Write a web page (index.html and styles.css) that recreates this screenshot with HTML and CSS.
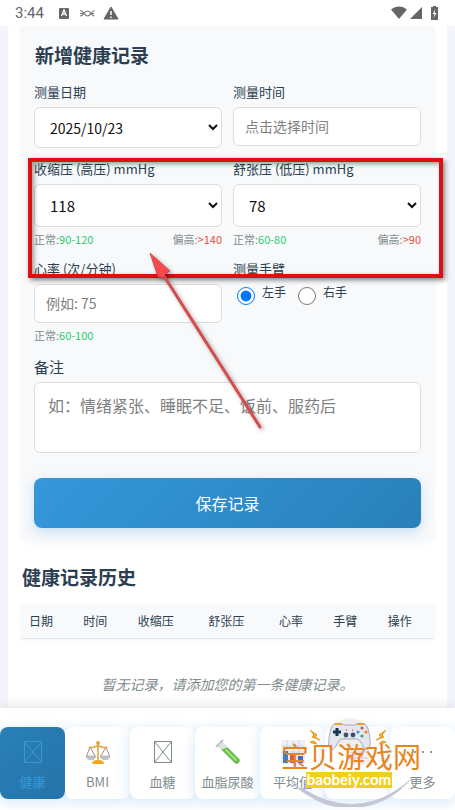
FILE: index.html
```
<!DOCTYPE html>
<html lang="zh-CN">
<head>
    <meta charset="UTF-8">
    <meta name="viewport" content="width=device-width, initial-scale=1.0">
    <title>健康记录</title>
    <link rel="stylesheet" href="styles.css">
</head>
<body>
    <header class="status">
        <span class="time">3:44</span>
        <svg class="status-left" width="62" height="14" viewBox="0 0 62 14">
            <rect x="1" y="2" width="10" height="11" rx="1" fill="#666"/>
            <path d="M3.500 10 6 4l2.500 6M4.500 8h3" fill="none" stroke="#fff" stroke-width="1.300"/>
            <path d="M22 4.500c4 0 4 5.500 7.500 5.500s3.500-5 7-5.500M22 10c4 0 4-5 7.500-5s3.500 5 7 5M22 7.500h3M33 7.500h3" fill="none" stroke="#777" stroke-width="1.100"/>
            <path d="M53 1 60 13H46z" fill="#666" stroke="#666" stroke-linejoin="round"/>
            <path d="M53 5v4M53 10.500v1.500" stroke="#fff" stroke-width="1.500"/>
        </svg>
        <svg class="status-right" width="50" height="16" viewBox="0 0 50 16">
            <path d="M1 4.500C6 .5 12 .5 17 4.500L9 14z" fill="#666"/>
            <path d="M32 2v12H20z" fill="#666"/>
            <path d="M41 2h2V1h3v1h2v13h-7z" fill="#666"/>
            <path d="M45.500 4 42.500 9H44.500L43.500 13 46.500 8H44.500z" fill="#fff"/>
        </svg>
    </header>

    <main class="container">
        <form class="card">
            <h2>新增健康记录</h2>
            <div class="grid">
                <div class="field">
                    <label for="date">测量日期</label>
                    <select id="date" class="date"><option>2025/10/23</option></select>
                </div>
                <div class="field">
                    <label for="time">测量时间</label>
                    <input id="time" type="text" placeholder="点击选择时间">
                </div>
                <div class="field">
                    <label for="sys">收缩压 (高压) mmHg</label>
                    <select id="sys"><option>118</option></select>
                    <div class="hint">
                        <span>正常:<b class="ok">90-120</b></span>
                        <span>偏高:<b class="high">&gt;140</b></span>
                    </div>
                </div>
                <div class="field">
                    <label for="dia">舒张压 (低压) mmHg</label>
                    <select id="dia"><option>78</option></select>
                    <div class="hint">
                        <span>正常:<b class="ok">60-80</b></span>
                        <span>偏高:<b class="high">&gt;90</b></span>
                    </div>
                </div>
                <div class="field">
                    <label for="rate">心率 (次/分钟)</label>
                    <input id="rate" type="text" placeholder="例如: 75">
                    <div class="hint">
                        <span>正常:<b class="ok">60-100</b></span>
                    </div>
                </div>
                <fieldset class="field">
                    <legend>测量手臂</legend>
                    <div class="arms">
                        <input id="left" type="radio" name="arm" checked>
                        <label for="left">左手</label>
                        <input id="right" type="radio" name="arm">
                        <label for="right">右手</label>
                    </div>
                </fieldset>
            </div>
            <div class="field note">
                <label for="note">备注</label>
                <textarea id="note" placeholder="如：情绪紧张、睡眠不足、饭前、服药后"></textarea>
            </div>
            <button class="save" type="button">保存记录</button>
        </form>

        <section class="history">
            <h2>健康记录历史</h2>
            <table>
                <thead>
                    <tr>
                        <th>日期</th>
                        <th>时间</th>
                        <th>收缩压</th>
                        <th>舒张压</th>
                        <th>心率</th>
                        <th>手臂</th>
                        <th>操作</th>
                    </tr>
                </thead>
            </table>
            <p class="empty">暂无记录，请添加您的第一条健康记录。</p>
        </section>
    </main>

    <nav class="tabs">
        <a href="#" class="active">
            <svg width="26" height="26" viewBox="0 0 26 26"><path d="M4.500 2.500h17v21h-17zM4.500 2.500l17 21M21.500 2.500l-17 21" fill="none" stroke="currentColor"/></svg>
            <span>健康</span>
        </a>
        <a href="#">
            <svg width="26" height="26" viewBox="0 0 26 26">
                <path d="M5 8 1.500 17M5 8l5 9M21 8l-5 9M21 8l3.500 9" fill="none" stroke="#b58a80"/>
                <path d="M1 17h10c-1 5-9 5-10 0zM15 17h10c-1 5-9 5-10 0z" fill="#bfc3c8" stroke="#989da3" stroke-width=".5"/>
                <path d="M13 5v18M4 8c4 2 5-1 9-1s5 3 9 1" fill="none" stroke="#e2a03a" stroke-width="1.500"/>
                <circle cx="13" cy="4" r="2" fill="#f0a32c"/>
                <path d="M7 25c0-4 4-4 6-4s6 0 6 4z" fill="#f5a623"/>
            </svg>
            <span>BMI</span>
        </a>
        <a href="#">
            <svg width="26" height="26" viewBox="0 0 26 26"><path d="M4.500 2.500h17v21h-17zM4.500 2.500l17 21M21.500 2.500l-17 21" fill="none" stroke="currentColor"/></svg>
            <span>血糖</span>
        </a>
        <a href="#">
            <svg width="26" height="26" viewBox="0 0 26 26">
                <path d="M3 7 7 3l17 17c2 3-2 6-4 4z" fill="#dde6e2" stroke="#b9c8c0" stroke-width=".6"/>
                <path d="M6 10c3 1 4-2 7-1l11 11c2 3-2 6-4 4z" fill="#66bd43"/>
                <path d="m11 11 10 10" stroke="#a5e37d" stroke-width="2" stroke-linecap="round"/>
                <path d="M1.500 7.500 7.500 1.500" stroke="#b8c7c4" stroke-width="2" stroke-linecap="round"/>
            </svg>
            <span>血脂尿酸</span>
        </a>
        <a href="#">
            <svg width="26" height="26" viewBox="0 0 26 26">
                <path d="M1 1h24v24H1z" fill="#eef1f7"/>
                <path d="M1 7h24M1 13h24M1 19h24M7 1v24M13 1v24M19 1v24" stroke="#c5cbe0" stroke-width=".7"/>
                <path d="M3 12h5v12H3z" fill="#3f7fd0"/>
                <path d="M10 15h5v9h-5z" fill="#e0564c"/>
                <path d="M18 17h5v7h-5z" fill="#4666c8"/>
            </svg>
            <span>平均值</span>
        </a>
        <a href="#" aria-label="日历">
            <svg width="26" height="26" viewBox="0 0 26 26">
                <path d="M2 1h22v24H2z" fill="#f5f2f5"/>
                <path d="M2 7h22M2 13h22M2 19h22M9 1v24M17 1v24" stroke="#dfc8d0"/>
                <path d="m3 20 7-7 5 4 8-11" fill="none" stroke="#e58787" stroke-width="1.500"/>
            </svg>
        </a>
        <a href="#">
            <svg width="26" height="26" viewBox="0 0 26 26"><circle cx="5" cy="13" r="1" fill="#777"/><circle cx="13" cy="13" r="1" fill="#777"/><circle cx="21" cy="13" r="1" fill="#777"/></svg>
            <span>更多</span>
        </a>
    </nav>

    <!-- 标注 -->
    <div class="mark"></div>
    <svg class="arrow" width="124" height="186" viewBox="0 0 124 186">
        <path d="M19 27 115 178" stroke="#d64b4b" stroke-width="3" stroke-linecap="round"/>
        <path d="M5 4 25 22 20 25 19 29 13 28z" fill="#f84a4a" stroke="#c33a3a" stroke-width=".7"/>
    </svg>

    <!-- 水印 -->
    <svg class="watermark" width="140" height="92" viewBox="0 0 140 92">
        <circle cx="69" cy="20" r="17" fill="#efefef"/>
        <path d="M53 9c3-1 7-1 10 1h11c3-2 7-2 10-1 4 3 6 17 5 22-1 5-5 4-7 0-2-4-4-7-7-7H62c-3 0-5 3-7 7-2 4-6 5-7 0-1-5 1-19 5-22z" fill="#e6e6ee" stroke="#a9a9b9"/>
        <path d="M54 9h7M76 9h7" stroke="#e5a22c" stroke-width="2"/>
        <path d="M56 13v8M52 17h8" stroke="#123a4c" stroke-width="3"/>
        <circle cx="81" cy="13" r="1.600" fill="#e8503a"/>
        <circle cx="77" cy="17" r="1.600" fill="#3a9bd8"/>
        <circle cx="85" cy="17" r="1.600" fill="#f08a24"/>
        <circle cx="81" cy="21" r="1.600" fill="#31a6a0"/>
        <circle cx="65" cy="20" r="2.400" fill="#34546a"/>
        <circle cx="72" cy="20" r="2.400" fill="#34546a"/>
        <path d="M65 15h1M71 15h1" stroke="#e0507a" stroke-width="1.500"/>
        <path d="m30 15 7 5-2 2 5 3-8-3 2-2zM106 15l-7 5 2 2-5 3 8-3-2-2zM30 27l4-1 3 3-5-1zM106 27l-4-1-3 3 5-1z" transform="translate(-1 0)" fill="#f6b12e" stroke="#e79a1f"/>
        <path d="M10 67c35 31 85 31 121-4-33 36-90 36-121 4z" fill="#c5c6d6" stroke="#c5c6d6" stroke-width="1"/>
        <path d="M14 69c34 28 80 28 112 0-30 29-82 31-112 0z" fill="#c5c6d6"/>
        <path d="M20 73c34 23 72 22 100 0-28 24-72 27-100 0z" fill="#c5c6d6" stroke="#c5c6d6" stroke-width="2"/>
        <rect x="25" y="57" width="86" height="16" fill="#f0cf1e"/>
        <text class="wm-name" x="0" y="53">宝贝游戏网</text>
        <text class="wm-site" x="68" y="70" text-anchor="middle">baobeiy.com</text>
    </svg>
</body>
</html>
```
FILE: styles.css
```
*{
    margin: 0;
    padding: 0;
    box-sizing: border-box;
}
body{
    position: relative;
    display: flex;
    flex-direction: column;
    min-height: 100vh;
    background-color: #f3f5fa;
    color: #2c3e50;
    font-family: "Noto Sans CJK SC", sans-serif;
}
input, select, textarea, button{
    font-family: inherit;
}

/* 状态栏 */
.status{
    display: flex;
    align-items: center;
    height: 26px;
    padding: 0 15px;
    background-color: #fff;
}
.time{
    font-family: Roboto, sans-serif;
    font-size: 15px;
    color: #666;
}
.status-left{
    margin-left: 14px;
}
.status-right{
    margin-left: auto;
}

/* 内容 */
.container{
    flex: 1;
    margin: 0 8px;
    padding: 0 12px;
    background-color: #fff;
}
.card{
    padding: 15px 14px;
    background-color: #f8f9fb;
    box-shadow: 0 2px 6px rgba(0, 0, 0, 0.02);
    border-radius: 0 0 8px 8px;
}
h2{
    padding-left: 1px;
    font-size: 19px;
    line-height: 28px;
    margin-bottom: 13px;
}
.grid{
    display: grid;
    grid-template-columns: 1fr 1fr;
    gap: 11px;
}
.field{
    min-width: 0;
    border: none;
}
.field > label, legend{
    display: block;
    margin-bottom: 5px;
    font-size: 13px;
    line-height: 20px;
}
.field > input, select, textarea{
    display: block;
    width: 100%;
    height: 39px;
    padding: 0 11px;
    border: 1px solid #ddd;
    border-radius: 6px;
    background-color: #fff;
    font-size: 14px;
}
.field > input{
    padding-bottom: 2px;
}
select{
    height: 43px;
    font-size: 15px;
    color: #111;
}
select.date{
    height: 41px;
    font-size: 14px;
}
::placeholder{
    color: #808080;
}
.hint{
    display: flex;
    justify-content: space-between;
    margin: 4px 0 1px;
    font-size: 11px;
    line-height: 16px;
    color: #7f8c8d;
}
.hint b{
    font-weight: normal;
}
.hint .ok{
    color: #2ecc71;
}
.hint .high{
    color: #e74c3c;
}
.arms{
    display: flex;
    align-items: flex-start;
    padding-left: 4px;
    font-size: 12px;
    line-height: 16px;
}
.arms input{
    width: 18px;
    height: 18px;
    margin: 3px 7px 0 0;
}
.arms label{
    margin-right: 12px;
}
.note{
    margin-top: 13px;
}
.note > label{
    font-size: 15px;
}
textarea{
    height: 71px;
    padding: 10px 13px;
    font-size: 16px;
    resize: none;
}
.save{
    display: block;
    width: 100%;
    height: 50px;
    margin-top: 25px;
    border: none;
    border-radius: 8px;
    background: linear-gradient(135deg, #3498db, #2980b9);
    box-shadow: 0 4px 12px rgba(52, 152, 219, 0.25);
    color: #fff;
    font-size: 16px;
}

/* 历史记录 */
.history{
    padding: 20px 1px 14px;
}
table{
    width: 100%;
    border-collapse: collapse;
    box-shadow: 0 2px 6px rgba(0, 0, 0, 0.04);
}
th{
    padding: 8px;
    border-bottom: 1px solid #e3e6ea;
    background-color: #f8f9fb;
    font-size: 12px;
    font-weight: normal;
    line-height: 18px;
    text-align: left;
}
.empty{
    margin-top: 35px;
    font-size: 14px;
    line-height: 20px;
    font-style: italic;
    text-align: center;
    color: #7f8c8d;
}

/* 底部导航 */
.tabs{
    display: flex;
    padding: 19px 0 11px;
    background-color: #fff;
    box-shadow: 0 -2px 12px rgba(0, 0, 0, 0.1);
}
.tabs a{
    flex: 1;
    display: flex;
    flex-direction: column;
    align-items: center;
    gap: 7px;
    height: 72px;
    padding-top: 12px;
    border-radius: 8px;
    background-color: #fff;
    box-shadow: 0 3px 14px rgba(52, 152, 219, 0.22);
    color: #7f8c8d;
    font-size: 13px;
    line-height: 20px;
    white-space: nowrap;
    text-decoration: none;
}
.tabs .active{
    background: linear-gradient(135deg, #2980b9, #2573a7);
    color: #3498db;
}

/* 标注和水印 */
.mark{
    position: absolute;
    top: 158px;
    left: 28px;
    right: 12px;
    height: 120px;
    border: 4px solid #dc0f12;
    box-shadow: 2px 2px 5px rgba(0, 0, 0, 0.5), inset 2px 2px 5px rgba(0, 0, 0, 0.4);
    pointer-events: none;
}
.arrow{
    position: absolute;
    top: 249px;
    left: 145px;
    filter: drop-shadow(2px 2px 2px rgba(0, 0, 0, 0.35));
    pointer-events: none;
}
.watermark{
    position: absolute;
    right: 34px;
    bottom: 3px;
    pointer-events: none;
}
.wm-name{
    font-size: 28px;
    fill: #e8851c;
}
.wm-site{
    font-family: Lato, sans-serif;
    font-size: 15px;
    font-weight: bold;
    fill: #fff;
}
```
